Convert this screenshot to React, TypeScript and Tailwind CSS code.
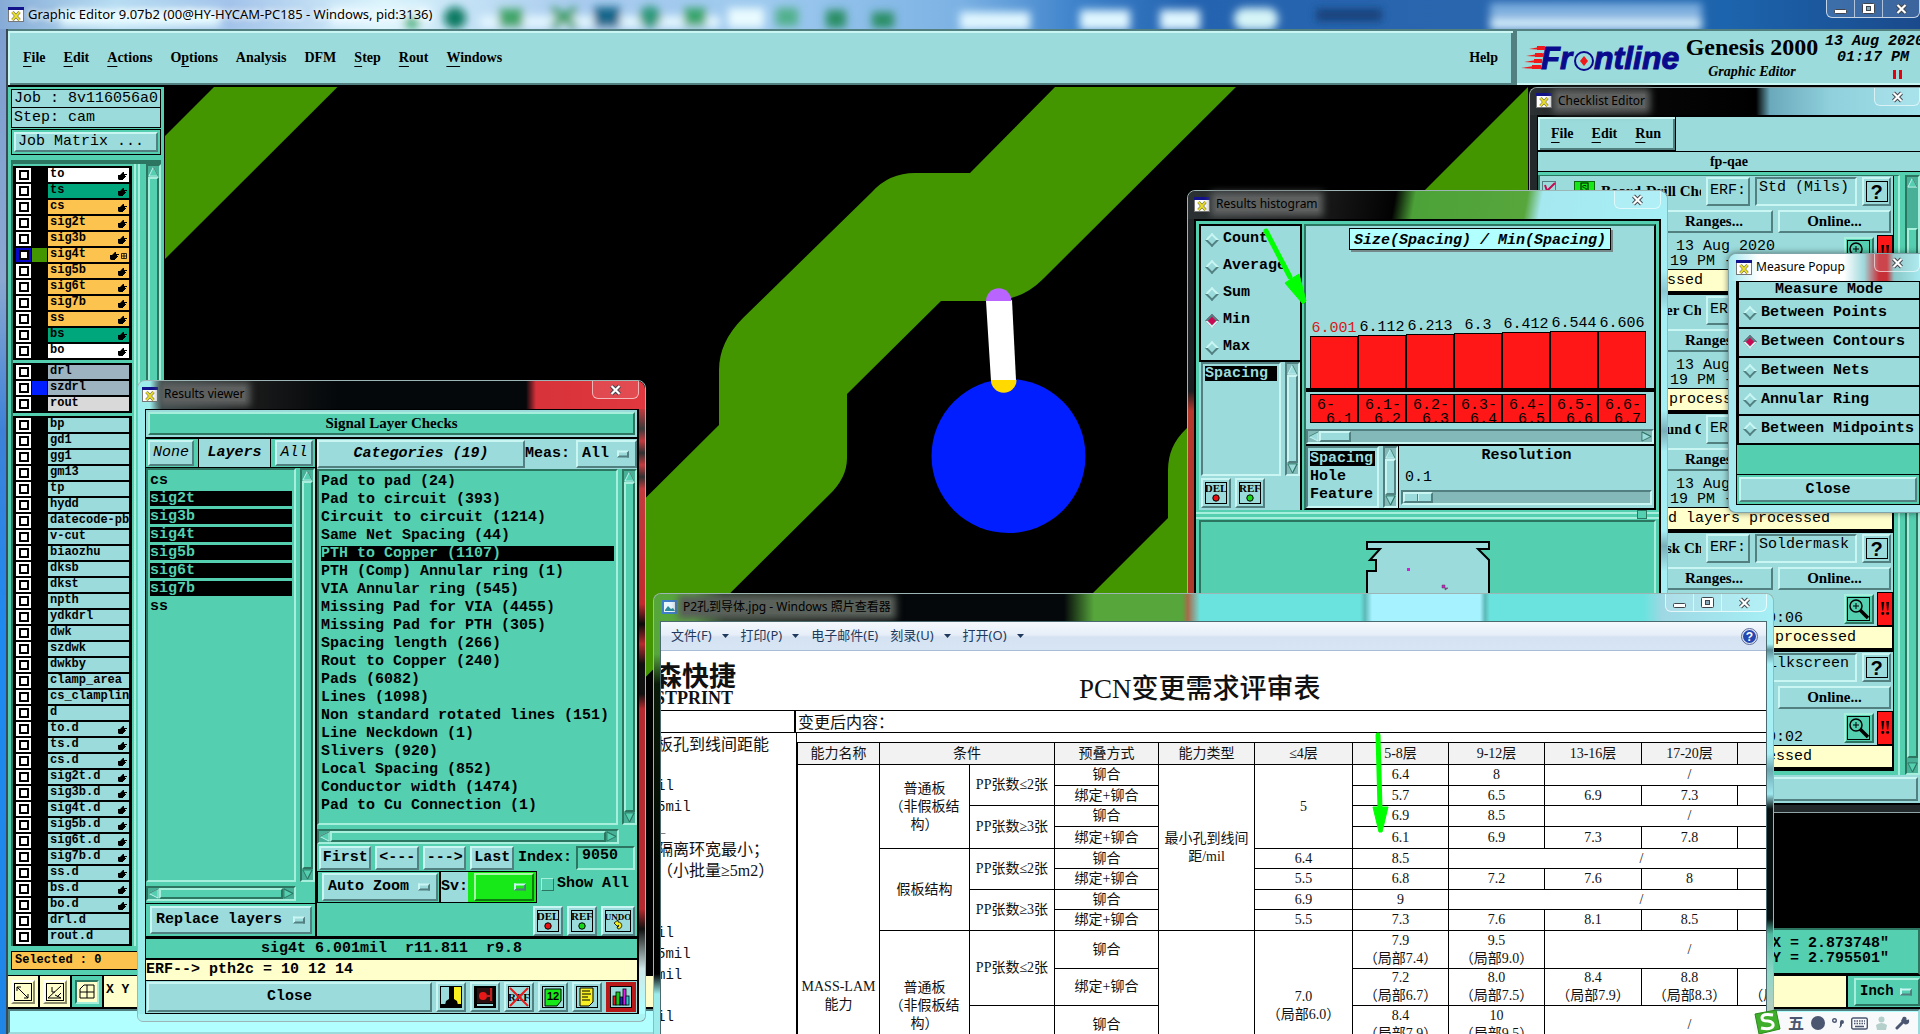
import React from "react";

const MONO = "font-['Liberation_Mono','Noto_Sans_CJK_SC',monospace]";
const SERIF = "font-['Liberation_Serif','Noto_Sans_CJK_SC',serif]";
const UI = "font-['Noto_Sans','Noto_Sans_CJK_SC',sans-serif]";

const RAISED =
  "border-2 border-t-[#c9f6f3] border-l-[#c9f6f3] border-b-[#527f80] border-r-[#527f80] bg-[#9bdbdb]";
const SUNKEN =
  "border-2 border-t-[#527f80] border-l-[#527f80] border-b-[#c9f6f3] border-r-[#c9f6f3] bg-[#9bdbdb]";
const RAISED_TEAL =
  "border-2 border-t-[#a5efdc] border-l-[#a5efdc] border-b-[#2b7561] border-r-[#2b7561] bg-[#54cfb0]";
const SUNKEN_TEAL =
  "border-2 border-t-[#2b7561] border-l-[#2b7561] border-b-[#a5efdc] border-r-[#a5efdc] bg-[#54cfb0]";

/* ---------- small shared pieces ---------- */

function XIcon() {
  return (
    <svg width="16" height="15" viewBox="0 0 16 15" className="shrink-0">
      <rect x="0.5" y="0.5" width="15" height="14" fill="#fff" stroke="#777" />
      <rect width="16" height="3" fill="#12128a" />
      <path d="M4.5 5l7 8M11.5 5l-7 8" stroke="#555" strokeWidth="3" />
      <path d="M4.5 5l7 8M11.5 5l-7 8" stroke="#e8dc2c" strokeWidth="2" />
    </svg>
  );
}

function CloseGlyph() {
  return (
    <svg width="13" height="12" viewBox="0 0 13 12">
      <path d="M2.5 2l8 8M10.5 2l-8 8" stroke="#40454d" strokeWidth="4" />
      <path d="M2.5 2l8 8M10.5 2l-8 8" stroke="#fff" strokeWidth="2.2" />
    </svg>
  );
}

function MinGlyph() {
  return (
    <svg width="13" height="12" viewBox="0 0 13 12">
      <rect x="0.5" y="6.5" width="12" height="4" rx="1" fill="#fff" stroke="#40454d" />
    </svg>
  );
}

function MaxGlyph() {
  return (
    <svg width="13" height="12" viewBox="0 0 13 12">
      <rect x="0.5" y="0.5" width="12" height="10" rx="1" fill="#fff" stroke="#40454d" />
      <rect x="4.5" y="3.5" width="4" height="4" fill="#8ab" stroke="#40454d" />
    </svg>
  );
}

function CloseButton({ className = "w-[47px]" }: { className?: string }) {
  return (
    <button
      aria-label="Close window"
      className={`ml-auto flex h-[18px] shrink-0 items-center justify-center self-start rounded-b-md border border-t-0 border-white/60 bg-white/10 ${className}`}
    >
      <CloseGlyph />
    </button>
  );
}

function ControlTrio({ className = "" }: { className?: string }) {
  return (
    <div className={`ml-auto flex h-[18px] self-start rounded-b-md border border-t-0 border-white/70 bg-white/15 ${className}`}>
      <button aria-label="Minimize" className="flex w-7 items-center justify-center border-r border-white/60"><MinGlyph /></button>
      <button aria-label="Maximize" className="flex w-7 items-center justify-center border-r border-white/60"><MaxGlyph /></button>
      <button aria-label="Close" className="flex flex-1 items-center justify-center"><CloseGlyph /></button>
    </div>
  );
}

function Arrow({ dir, tone }: { dir: "up" | "down" | "left" | "right"; tone: "teal" | "aqua" }) {
  const points = {
    up: "6,1 11,11 1,11",
    down: "6,11 11,1 1,1",
    left: "1,6 11,1 11,11",
    right: "11,6 1,1 1,11",
  }[dir];
  return (
    <svg viewBox="0 0 12 12" className="h-[11px] w-[11px] shrink-0">
      <polygon
        points={points}
        fill={tone === "teal" ? "#54cfb0" : "#9bdbdb"}
        stroke={dir === "up" || dir === "left" ? "#c9f6f3" : "#2b7561"}
        strokeWidth="1"
      />
      <polyline points={points.split(" ").slice(0, 2).join(" ")} fill="none" stroke="#2b7561" strokeWidth="1" />
    </svg>
  );
}

function VScroll({ tone = "teal", thumb = "flex-1" }: { tone?: "teal" | "aqua"; thumb?: string }) {
  const trough = tone === "teal" ? "border-t-[#2b7561] border-l-[#2b7561] border-b-[#a5efdc] border-r-[#a5efdc] bg-[#47b096]" : "border-t-[#527f80] border-l-[#527f80] border-b-[#c9f6f3] border-r-[#c9f6f3] bg-[#84b9b9]";
  return (
    <div className={`flex w-[15px] shrink-0 flex-col items-center self-stretch border-2 ${trough}`}>
      <Arrow dir="up" tone={tone} />
      <div className={`w-[11px] ${thumb} ${tone === "teal" ? RAISED_TEAL : RAISED}`} />
      <div className={thumb === "flex-1" ? "" : "flex-1"} />
      <Arrow dir="down" tone={tone} />
    </div>
  );
}

function HScroll({ tone = "teal", thumb = "flex-1" }: { tone?: "teal" | "aqua"; thumb?: string }) {
  const trough = tone === "teal" ? "border-t-[#2b7561] border-l-[#2b7561] border-b-[#a5efdc] border-r-[#a5efdc] bg-[#47b096]" : "border-t-[#527f80] border-l-[#527f80] border-b-[#c9f6f3] border-r-[#c9f6f3] bg-[#84b9b9]";
  return (
    <div className={`flex h-[15px] items-center border-2 ${trough}`}>
      <Arrow dir="left" tone={tone} />
      <div className={`h-[11px] ${thumb} ${tone === "teal" ? RAISED_TEAL : RAISED}`} />
      <div className={thumb === "flex-1" ? "" : "flex-1"} />
      <Arrow dir="right" tone={tone} />
    </div>
  );
}

function OptionMenu({ label, options, className, tone = "aqua" }: { label: string; options: string[]; className: string; tone?: "aqua" | "green" | "teal" }) {
  const skin = {
    aqua: RAISED,
    teal: RAISED_TEAL,
    green: "border-2 border-t-[#a6f7a6] border-l-[#a6f7a6] border-b-[#0f7a0f] border-r-[#0f7a0f] bg-[#17e817]",
  }[tone];
  return (
    <div className="relative flex">
      <select aria-label={label} className={`appearance-none outline-none ${skin} ${className}`}>
        {options.map((o) => (
          <option key={o}>{o}</option>
        ))}
      </select>
      <span className="pointer-events-none absolute right-2 top-1/2 h-[7px] w-3 -translate-y-1/2 border-2 border-t-[#c9f6f3] border-l-[#c9f6f3] border-b-[#527f80] border-r-[#527f80]" />
    </div>
  );
}

function Diamond({ name, checked }: { name: string; checked?: boolean }) {
  return (
    <input
      type="radio"
      name={name}
      defaultChecked={checked}
      className="h-[10px] w-[10px] shrink-0 rotate-45 appearance-none border-2 border-t-[#c9f6f3] border-l-[#c9f6f3] border-b-[#527f80] border-r-[#527f80] checked:border-t-[#527f80] checked:border-l-[#527f80] checked:border-b-[#c9f6f3] checked:border-r-[#c9f6f3] checked:bg-[#c80a52]"
    />
  );
}

function PixelButton({ label, children, wide }: { label: string; children: React.ReactNode; wide?: boolean }) {
  return (
    <button aria-label={label} className={`flex h-[30px] shrink-0 items-center justify-center ${wide ? "w-[34px]" : "w-[30px]"} ${RAISED}`}>
      {children}
    </button>
  );
}

function TagIcon({ text, kind }: { text: string; kind: "red" | "green" | "undo" }) {
  const w = kind === "undo" ? 26 : 22;
  return (
    <svg width={w} height="22" viewBox={`0 0 ${w} 22`}>
      <rect x="0.5" y="0.5" width={w - 1} height="21" fill="none" stroke="#000" />
      <text x={w / 2} y="10" textAnchor="middle" fontFamily="Liberation Serif" fontSize={kind === "undo" ? "9" : "11"} fontWeight="bold">{text}</text>
      {kind === "undo" ? (
        <path d="M9 13l4-3v2c5 0 5 7 0 7l-1-2c2 0 2-2 1-2v2z" fill="#f2ee1d" stroke="#000" strokeWidth="0.8" />
      ) : (
        <circle cx={w / 2} cy="16" r="3.200" fill={kind === "red" ? "#e81010" : "#17d817"} stroke="#000" />
      )}
    </svg>
  );
}

/* ---------- main window ---------- */

function BlurredBackdrop() {
  return (
    <svg className="absolute inset-0 h-full w-full" viewBox="0 0 1920 29" preserveAspectRatio="none" aria-hidden="true">
      <defs>
        <filter id="soft" x="-20%" y="-60%" width="140%" height="220%"><feGaussianBlur stdDeviation="4" /></filter>
        <linearGradient id="sky" x1="0" x2="1" y1="0" y2="0">
          <stop offset="0" stopColor="#86abd6" />
          <stop offset="0.06" stopColor="#b6dcf2" />
          <stop offset="0.12" stopColor="#a3c3ea" />
          <stop offset="0.2" stopColor="#d9f3fb" />
          <stop offset="0.3" stopColor="#a9cbee" />
          <stop offset="0.4" stopColor="#9dc9ee" />
          <stop offset="0.5" stopColor="#7cb2e4" />
          <stop offset="0.56" stopColor="#3f83cb" />
          <stop offset="0.62" stopColor="#2463b0" />
          <stop offset="0.76" stopColor="#2a66ae" />
          <stop offset="0.9" stopColor="#1c64ad" />
          <stop offset="1" stopColor="#1a4a8c" />
        </linearGradient>
      </defs>
      <rect width="1920" height="29" fill="url(#sky)" />
      <g filter="url(#soft)">
        <rect x="60" y="10" width="160" height="16" fill="#e6fbff" />
        <rect x="330" y="6" width="100" height="20" fill="#e6f8ff" />
        <rect x="480" y="16" width="240" height="12" fill="#e3f6ff" />
        <circle cx="455" cy="18" r="11" fill="#0f7a63" />
        <circle cx="412" cy="22" r="8" fill="#58b88a" />
        <rect x="499" y="9" width="24" height="18" fill="#3fa568" />
        <path d="M552 9l24 18M576 9l-24 18" stroke="#2f9a5c" strokeWidth="7" />
        <rect x="594" y="7" width="26" height="20" fill="#14668a" />
        <circle cx="650" cy="17" r="11" fill="#2f9a7c" />
        <rect x="684" y="8" width="22" height="18" fill="#38a56c" />
        <rect x="728" y="8" width="36" height="20" fill="#e9fbff" />
        <rect x="776" y="8" width="22" height="18" fill="#51b18c" />
        <rect x="826" y="10" width="20" height="18" fill="#2b8f66" />
        <rect x="872" y="12" width="22" height="16" fill="#2b8f66" />
        <rect x="960" y="12" width="70" height="18" fill="#dff6ff" />
        <rect x="1080" y="10" width="50" height="20" fill="#dff6ff" />
        <rect x="1160" y="10" width="40" height="20" fill="#dff6ff" />
        <rect x="1234" y="8" width="44" height="22" rx="10" fill="#d5f4f8" />
        <rect x="1316" y="9" width="66" height="12" fill="#173f78" />
        <rect x="1490" y="3" width="212" height="14" fill="#7fb0e0" />
        <rect x="1490" y="18" width="212" height="12" fill="#d3ecfb" />
      </g>
    </svg>
  );
}

const MENUS: [string, number][] = [["File", 0], ["Edit", 0], ["Actions", 0], ["Options", 1], ["Analysis", -1], ["DFM", -1], ["Step", 0], ["Rout", 0], ["Windows", 0]];

function MenuLabel({ text, at }: { text: string; at: number }) {
  if (at < 0) return <>{text}</>;
  return (
    <>
      {text.slice(0, at)}
      <span className="underline underline-offset-4">{text[at]}</span>
      {text.slice(at + 1)}
    </>
  );
}

function FrontlineLogo() {
  return (
    <svg width="162" height="34" viewBox="0 0 162 34" role="img" aria-label="Frontline" className="overflow-visible">
      <g fill="#f01818">
        <path d="M8 4L24 1v4zM5 11l18-3v4zM3 17l18-3v4zM0 23l20-3v4z" />
        <rect x="16" y="1" width="7" height="4" /><rect x="14" y="8" width="7" height="4" /><rect x="13" y="14" width="7" height="4" /><rect x="11" y="20" width="8" height="4" />
      </g>
      <text x="20" y="24" fontFamily="Liberation Sans" fontStyle="italic" fontWeight="bold" fontSize="31" fill="#0a0a8c" stroke="#0a0a8c">Fr</text>
      <circle cx="63" cy="16" r="9" fill="none" stroke="#0a0a8c" strokeWidth="2" />
      <path d="M63 11l4 5-4 5-4-5z" fill="#f01818" />
      <text x="73" y="24" fontFamily="Liberation Sans" fontStyle="italic" fontWeight="bold" fontSize="32" fill="#0a0a8c" stroke="#0a0a8c">ntline</text>
    </svg>
  );
}

type Layer = { name: string; bg: string; hand?: boolean; swatch?: string; active?: boolean };
const W = "bg-white", G = "bg-[#00a67c]", O = "bg-[#fcc44f]", A = "bg-[#9bdbdb]";
const GROUPS: Layer[][] = [
  [
    { name: "to", bg: W, hand: true },
    { name: "ts", bg: G, hand: true },
    { name: "cs", bg: O, hand: true },
    { name: "sig2t", bg: O, hand: true },
    { name: "sig3b", bg: O, hand: true },
    { name: "sig4t", bg: O, hand: true, swatch: "bg-[#439600]", active: true },
    { name: "sig5b", bg: O, hand: true },
    { name: "sig6t", bg: O, hand: true },
    { name: "sig7b", bg: O, hand: true },
    { name: "ss", bg: O, hand: true },
    { name: "bs", bg: G, hand: true },
    { name: "bo", bg: W, hand: true },
  ],
  [
    { name: "drl", bg: "bg-[#9db3bf]" },
    { name: "szdrl", bg: "bg-[#9db3bf]", swatch: "bg-[#001eff]" },
    { name: "rout", bg: "bg-[#d9d9d9]" },
  ],
  [
    ..."bp gd1 gg1 gm13 tp hydd datecode-pbo v-cut biaozhu dksb dkst npth ydkdrl dwk szdwk dwkby clamp_area cs_clampline d"
      .split(" ").map((name) => ({ name, bg: A })),
    ..."to.d ts.d cs.d sig2t.d sig3b.d sig4t.d sig5b.d sig6t.d sig7b.d ss.d bs.d bo.d"
      .split(" ").map((name) => ({ name, bg: A, hand: true })),
    { name: "drl.d", bg: A },
    { name: "rout.d", bg: A },
  ],
];

function Hand() {
  return (
    <svg width="9" height="9" viewBox="0 0 9 9" className="shrink-0">
      <path d="M0 4h2l3-3h1v2h3v1H7v1h1v1H7v1H6v1H5v1H1L0 8z" fill="#000" />
    </svg>
  );
}

function LayerRow({ layer }: { layer: Layer }) {
  return (
    <label className="flex h-4 items-start gap-px">
      <span className={`flex h-[14px] w-[15px] shrink-0 items-center justify-center ${layer.active ? "bg-[#0808c8]" : "bg-white"}`}>
        <input type="checkbox" className="h-[10px] w-[10px] appearance-none border-2 border-black bg-white" />
      </span>
      <span className={`h-[14px] w-[15px] shrink-0 ${layer.swatch ?? ""}`} />
      <span className={`flex h-[14px] min-w-0 flex-1 items-center overflow-hidden px-0.5 text-xs font-bold leading-[13px] ${layer.bg}`}>
        <span className="flex-1 self-start whitespace-nowrap">{layer.name}</span>
        {layer.hand && <Hand />}
        {layer.active && (
          <svg width="6" height="7" viewBox="0 0 6 7" className="ml-0.5 shrink-0"><path d="M.5 1.500h5v5h-5zM3 1.500v5M.5 4h5" fill="none" stroke="#000" strokeWidth=".8" /></svg>
        )}
      </span>
    </label>
  );
}

function Sidebar() {
  return (
    <aside className="flex w-[156px] shrink-0 flex-col bg-[#54cfb0] px-[3px] pt-0.5">
      <div className="h-[19px] whitespace-nowrap border border-black bg-[#9bdbdb] px-0.5 text-[15px] leading-[18px]">Job : 8v116056a0</div>
      <div className="h-5 border border-t-0 border-black bg-[#9bdbdb] px-0.5 text-[15px] leading-[20px]">Step: cam</div>
      <div className="mt-px border border-black p-0.5">
        <button className={`block h-5 w-full px-0.5 text-left text-[15px] leading-[16px] ${RAISED}`}>Job Matrix ...</button>
      </div>
      <div className="mt-[5px] flex border-t-4 border-[#2b7561]">
        <div className="flex w-[123px] flex-col gap-[3px] border-l-2 border-[#2b7561] pt-0.5">
          {GROUPS.map((g, i) => (
            <div key={i} className="mr-0.5 bg-black px-[3px] pt-0.5">
              {g.map((l) => <LayerRow key={l.name} layer={l} />)}
            </div>
          ))}
        </div>
        <div className="mr-1.5 flex-1 border-x-2 border-[#a5efdc]" />
        <VScroll />
      </div>
      <div className="mt-[5px] h-[19px] border border-black bg-[#fcc44f] px-[3px] text-xs font-bold leading-[16px]">Selected : 0</div>
    </aside>
  );
}

function Canvas() {
  return (
    <main className="relative min-w-0 flex-1 overflow-hidden bg-black">
      <svg className="h-full w-full" viewBox="164 87 1756 888" preserveAspectRatio="xMinYMin slice" aria-label="Layer drawing">
        <g fill="#439600">
          <path d="M214 87H337.500L165 259V136z" />
          <path d="M1055 87L970 173H915Q889 173 872 192L743 318Q719 342 719 370V425L560 583V762L829 495Q847 478 847 458V394L941 301H985Q1020 302 1042 280L1236 87z" />
          <path d="M1528 87L1186 429Q1168 446 1168 470V518L1000 686H1528z" />
        </g>
        <circle cx="1008.500" cy="456" r="77" fill="#001eff" />
        <path d="M986 301L1012 300L1016 380L991 381z" fill="#fff" />
        <path d="M986 301a12.700 12.700 0 0 1 25.500 0z" fill="#b964ff" />
        <path d="M991 380h25.500a12.700 12.700 0 0 1-25.500 0z" fill="#ffd900" />
      </svg>
      <div className="absolute bottom-0 right-0 flex h-[47px] w-[400px] flex-col justify-center border-2 border-t-[#2b7561] border-b-black border-x-[#2b7561] bg-[#54cfb0] pb-0.5 pl-[250px] text-[15px] font-bold leading-[15px]">
        <div>X = 2.873748"</div>
        <div>Y = 2.795501"</div>
      </div>
    </main>
  );
}

function ToolbarIcon({ label, children, active }: { label: string; children: React.ReactNode; active?: boolean }) {
  return (
    <button aria-label={label} className={`flex w-8 shrink-0 items-center justify-center border-r-2 border-black ${active ? "bg-[#54cfb0]" : "bg-[#ffffcc]"}`}>
      <span className={`flex h-6 w-6 items-center justify-center border-2 bg-[#ffffcc] ${active ? "border-t-[#2b7561] border-l-[#2b7561] border-b-[#a5efdc] border-r-[#a5efdc]" : "border-t-white border-l-white border-b-[#8c8c6a] border-r-[#8c8c6a]"}`}>
        <svg width="20" height="20" viewBox="0 0 20 20" fill="none" stroke="#000">{children}</svg>
      </span>
    </button>
  );
}

function MainWindow() {
  return (
    <div className={`flex h-screen flex-col ${MONO}`}>
      <header className={`relative flex h-[29px] shrink-0 overflow-hidden bg-[#86abd6] pl-2 ${UI}`}>
        <BlurredBackdrop />
        <div className="relative flex items-center gap-1"><XIcon /><h1 className="whitespace-nowrap text-[13px] [text-shadow:0_0_6px_#fff,0_0_6px_#fff]">Graphic Editor 9.07b2 (00@HY-HYCAM-PC185 - Windows, pid:3136)</h1></div>
        <ControlTrio className="relative w-[94px]" />
      </header>
      <div className="flex min-h-0 flex-1">
        <div className="w-2 shrink-0 border-r-2 border-[#3a4a55] bg-[linear-gradient(180deg,#7d9fd0_0%,#8aa8d2_25%,#3d82d8_40%,#1e8af0_60%,#1f86e6_100%)]" />
        <div className="flex min-w-0 flex-1 flex-col">
          <div className="flex h-[58px] shrink-0 border-b-2 border-black bg-[#9bdbdb]">
            <nav className={`flex min-w-0 flex-1 items-center gap-[18px] border-t-2 border-[#527f80] px-[15px] pb-0.5 text-[14px] font-bold shadow-[inset_2px_2px_0_#c9f6f3,inset_-2px_-2px_0_#527f80] ${SERIF}`}>
              {MENUS.map(([t, at]) => <button key={t}><MenuLabel text={t} at={at} /></button>)}
              <button className="ml-auto">Help</button>
            </nav>
            <div className="flex w-[407px] shrink-0 items-start overflow-hidden border-l-4 border-t-2 border-[#527f80] pl-1 pt-[3px] shadow-[inset_0_-2px_0_#c9f6f3]">
              <div className="pt-[11px]"><FrontlineLogo /></div>
              <div className={`w-[138px] shrink-0 text-center font-bold ${SERIF}`}>
                <div className="whitespace-nowrap text-2xl leading-[26px]">Genesis 2000</div>
                <div className="text-[14px] italic leading-[24px]">Graphic Editor</div>
              </div>
              <div className="ml-1 shrink-0 text-[15px] font-bold italic leading-4">
                <div className="whitespace-nowrap">13 Aug 2020</div>
                <div className="pl-3">01:17 PM</div>
                <div className="ml-[68px] mt-1 h-[9px] w-[9px] border-x-[3px] border-red-600" />
              </div>
            </div>
          </div>
          <div className="flex min-h-0 flex-1"><Sidebar /><Canvas /></div>
          <div className="flex h-[34px] shrink-0 border-b-2 border-t border-black bg-[#ffffcc]">
            <ToolbarIcon label="Scale"><rect x="1.500" y="1.500" width="17" height="17" /><path d="M4 5l11 11M4 9V5h4M15 12v4h-4" /></ToolbarIcon>
            <ToolbarIcon label="Angle"><rect x="1.500" y="1.500" width="17" height="17" /><path d="M3 16L16 4M3 16h13M7 5v5h3M10 13l6 3M12 15l4-4" /></ToolbarIcon>
            <ToolbarIcon label="Grid" active><path d="M3 16V7l4-4h10v13zM3 10h14M10 3v13" /></ToolbarIcon>
            <label htmlFor="xy" className="self-center px-0.5 pb-1 text-[13px] font-bold">X Y</label>
            <input id="xy" className="min-w-0 flex-1 bg-transparent outline-none" />
            <div className="flex items-center border-l-2 border-black bg-[#54cfb0] pl-1.5">
              <OptionMenu label="Units" tone="teal" options={["Inch", "mm"]} className="h-7 w-[66px] px-1 text-[14px] font-bold" />
            </div>
          </div>
          <div className="h-[25px] shrink-0 border-2 border-t-[#527f80] border-l-[#527f80] border-b-[#9bdbdb] border-r-[#9bdbdb] bg-[#b2ffff]" />
        </div>
      </div>
    </div>
  );
}

/* ---------- results viewer ---------- */

const CATEGORIES = [
  "Pad to pad (24)", "Pad to circuit (393)", "Circuit to circuit (1214)", "Same Net Spacing (44)", "PTH to Copper (1107)",
  "PTH (Comp) Annular ring (1)", "VIA Annular ring (545)", "Missing Pad for VIA (4455)", "Missing Pad for PTH (305)",
  "Spacing length (266)", "Rout to Copper (240)", "Pads (6082)", "Lines (1098)", "Non standard rotated lines (151)",
  "Line Neckdown (1)", "Slivers (920)", "Local Spacing (852)", "Conductor width (1474)", "Pad to Cu Connection (1)",
];

function ListBox({ items, selected, label }: { items: string[]; selected: string[]; label: string }) {
  return (
    <ul role="listbox" aria-label={label} aria-multiselectable="true" className="min-w-0 flex-1 overflow-hidden px-0.5 text-[15px] font-bold">
      {items.map((it) => {
        const on = selected.includes(it);
        return (
          <li key={it} role="option" aria-selected={on} className={`my-[3px] h-[15px] whitespace-nowrap leading-[16px] ${on ? "bg-black text-[#54cfb0]" : ""}`}>{it}</li>
        );
      })}
    </ul>
  );
}

function ResultsViewer() {
  return (
    <section className="absolute left-[137px] top-[380px] w-[509px] overflow-hidden rounded-t-lg rounded-b-md border border-[#9db5b5] bg-[linear-gradient(90deg,#9beceb_0,#9beceb_18px,#000_26px)] px-[7px] pb-[7px]">
      <div className="absolute bottom-0 right-0 top-7 w-1.5 bg-[linear-gradient(180deg,#c23a3e_0,#3a3a3a_20px,#c23a3e_32px,#303030_44px,#c23a3e_56px,#303030_68px,#c23a3e_80px,#c22a2e_195px,#0a0a0a_215px,#b52a2e_235px,#101010_255px,#101010_285px,#b52a2e_300px,#b52a2e_500px,#101010_520px,#cfe8e8_560px,#b2ffff_600px)]" />
      <div className="absolute inset-x-0 bottom-0 h-[7px] bg-[#a9f3f3]" />
      <header className="relative -mx-[7px] flex h-[28px] items-center gap-1 rounded-t-lg bg-[linear-gradient(90deg,#9beceb_0,#9beceb_12px,#3a4a4a_24px,#1b1b1b_110px,#04080a_200px,#04080a_388px,#d8323a_398px,#e0383e_100%)] pb-0.5 pl-1 pr-1.5">
        <XIcon />
        <h2 className={`ml-0.5 bg-[#5e6060] text-[12px] leading-[14px] shadow-[0_0_7px_5px_#5e6060] ${UI}`}>Results viewer</h2>
        <CloseButton />
      </header>
      <div className={`relative border border-black bg-black ${MONO}`}>
        <div className="bg-[#9bdbdb] p-0.5">
          <div className={`h-[23px] text-center text-[15px] font-bold leading-[18px] ${RAISED_TEAL} ${SERIF}`}>Signal Layer Checks</div>
        </div>
        <div className="mt-0.5 flex gap-0.5">
          <div className="flex w-[169px] shrink-0 flex-col bg-[#54cfb0]">
            <div className="flex h-[29px] items-stretch gap-1 border-b border-black bg-[#54cfb0] text-[15px] italic">
              <button className={`my-px ml-0.5 w-[46px] leading-[22px] ${RAISED}`}>None</button>
              <div className="flex-1 border-x border-black bg-[#9bdbdb] text-center font-bold leading-[27px]">Layers</div>
              <button className={`my-px mr-0.5 w-[38px] leading-[22px] ${RAISED}`}>All</button>
            </div>
            <div className="flex flex-1 gap-1">
              <div className={`flex flex-1 ${SUNKEN_TEAL}`}>
                <ListBox label="Layers" items={["cs", "sig2t", "sig3b", "sig4t", "sig5b", "sig6t", "sig7b", "ss"]} selected={["sig2t", "sig3b", "sig4t", "sig5b", "sig6t", "sig7b"]} />
              </div>
              <VScroll />
            </div>
            <div className="mb-0.5 mr-[19px] mt-1"><HScroll /></div>
            <div className="border-t border-black py-0.5 pl-1 pr-0.5">
              <OptionMenu label="Layer list mode" options={["Replace layers", "Add layers"]} className="h-7 w-[162px] px-1 text-[15px] font-bold" />
            </div>
          </div>
          <div className="flex min-w-0 flex-1 flex-col bg-[#54cfb0]">
            <div className="flex h-[30px] items-center bg-[#9bdbdb] text-[15px] font-bold">
              <button className={`h-[28px] w-[208px] italic leading-[22px] ${RAISED}`}>Categories (19)</button>
              <span className="flex-1">Meas:</span>
              <OptionMenu label="Meas" options={["All"]} className="h-[28px] w-[61px] px-1" />
            </div>
            <div className="flex gap-1">
              <div className={`flex flex-1 pb-[7px] ${SUNKEN_TEAL}`}>
                <ListBox label="Categories" items={CATEGORIES} selected={["PTH to Copper (1107)"]} />
              </div>
              <VScroll />
            </div>
            <div className="mb-0.5 mr-[18px] mt-1"><HScroll /></div>
            <div className="flex h-[24px] items-stretch gap-1 px-0.5 text-[15px] font-bold">
              <button className={`w-[53px] leading-[18px] ${RAISED}`}>First</button>
              <button className={`w-[44px] leading-[18px] ${RAISED}`}>&lt;---</button>
              <button className={`w-[44px] leading-[18px] ${RAISED}`}>---&gt;</button>
              <button className={`w-[44px] leading-[18px] ${RAISED}`}>Last</button>
              <label htmlFor="index" className="flex-1 self-center">Index:</label>
              <input id="index" defaultValue="9050" className={`w-[59px] px-1 pb-1 outline-none ${SUNKEN_TEAL}`} />
            </div>
            <div className="mt-px flex h-8 items-center text-[15px] font-bold">
              <div className="flex h-full items-center border border-black pl-1 pr-px">
                <OptionMenu label="Zoom mode" options={["Auto Zoom", "Manual"]} className="h-7 w-[116px] px-1" />
              </div>
              <div className="flex h-full items-center border border-black bg-[#9bdbdb]">
                <span className="w-[27px]">Sv:</span>
                <div className="flex h-full items-center bg-[#17e817] pl-1.5 pr-0.5">
                  <OptionMenu label="Severity" tone="green" options={[""]} className="h-7 w-[60px]" />
                </div>
              </div>
              <label className="ml-1 flex items-center gap-[3px] whitespace-nowrap pb-1.5">
                <input type="checkbox" className="h-[13px] w-[13px] appearance-none border border-t-[#a5efdc] border-l-[#a5efdc] border-b-[#2b7561] border-r-[#2b7561]" />
                Show All
              </label>
            </div>
            <div className="flex flex-1 items-start justify-end gap-1 pr-0.5 pt-[3px]">
              <PixelButton label="Delete"><TagIcon text="DEL" kind="red" /></PixelButton>
              <PixelButton label="Reference"><TagIcon text="REF" kind="green" /></PixelButton>
              <PixelButton label="Undo" wide><TagIcon text="UNDO" kind="undo" /></PixelButton>
            </div>
          </div>
        </div>
        <div className="mt-[3px] h-[19px] whitespace-pre bg-[#54cfb0] text-center text-[15px] font-bold leading-[19px]">sig4t 6.001mil  r11.811  r9.8</div>
        <div className="mt-0.5 h-[20px] bg-[#ffffcc] text-[15px] font-bold leading-[19px]">ERF--&gt; pth2c = 10 12 14</div>
        <div className="mt-px flex gap-1 bg-[#9bdbdb] p-px">
          <button className={`h-[30px] flex-1 text-[15px] font-bold leading-[24px] ${RAISED}`}>Close</button>
          <PixelButton label="Silhouette">
            <svg width="22" height="22" viewBox="0 0 22 22"><rect width="22" height="22" fill="#000" /><rect x="1" y="1" width="9" height="17" fill="#9bdbdb" /><rect x="13" y="1" width="8" height="17" fill="#f8f020" /><path d="M9 0h5v13l3 2 1 4 4 1v2H0v-2l5-1 1-4 3-2z" fill="#000" /></svg>
          </PixelButton>
          <PixelButton label="Snapshot">
            <svg width="22" height="22" viewBox="0 0 22 22"><rect width="22" height="22" fill="#000" /><rect x="3" y="2" width="16" height="15" fill="#2a1010" /><circle cx="9" cy="10" r="4" fill="#e81818" /><path d="M17 2v13M12 10h5" stroke="#c02020" strokeWidth="2" /><rect x="3" y="18" width="16" height="2" fill="#9bdbdb" /></svg>
          </PixelButton>
          <PixelButton label="Clear reference">
            <svg width="22" height="22" viewBox="0 0 22 22"><rect x=".5" y=".5" width="21" height="21" fill="none" stroke="#000" /><text x="11" y="15" textAnchor="middle" fontFamily="Liberation Serif" fontSize="11" fontWeight="bold">REF</text><path d="M2 2l18 18M20 2L2 20" stroke="#e81818" strokeWidth="2" /></svg>
          </PixelButton>
          <PixelButton label="Numbered pages">
            <svg width="22" height="22" viewBox="0 0 22 22"><rect x=".5" y=".5" width="21" height="21" fill="none" stroke="#000" /><path d="M3 3h16v12l-4 5H3z" fill="#17e817" stroke="#000" /><text x="11" y="14" textAnchor="middle" fontFamily="Liberation Sans" fontSize="11" fontWeight="bold">12</text></svg>
          </PixelButton>
          <PixelButton label="Notes">
            <svg width="22" height="22" viewBox="0 0 22 22"><rect x=".5" y=".5" width="21" height="21" fill="none" stroke="#000" /><path d="M4 2h13v14l-4 4H4z" fill="#f8f020" stroke="#000" /><path d="M6 5h8M6 8h9M6 11h6M6 14h8" stroke="#000" /></svg>
          </PixelButton>
          <button aria-label="Histogram" className="flex h-[30px] w-[30px] items-center justify-center bg-[#b81818]">
            <svg width="22" height="22" viewBox="0 0 22 22"><rect x=".5" y=".5" width="21" height="21" fill="#9bdbdb" stroke="#000" /><g stroke="#000" strokeWidth=".8"><rect x="3" y="10" width="3" height="9" fill="#e81818" /><rect x="6" y="6" width="4" height="13" fill="#17c817" /><rect x="10" y="11" width="3" height="8" fill="#2020e0" /><rect x="13" y="3" width="3" height="16" fill="#e020e0" /><rect x="16" y="10" width="3" height="9" fill="#20d0e0" /></g></svg>
          </button>
        </div>
      </div>
    </section>
  );
}

/* ---------- checklist editor ---------- */

type Check = { title: string; titlePad: string; erf: string; date?: string; time: string; timePad: string; status: string; statusPad: string };
const CHECKS: Check[] = [
  { title: "Board-Drill Checks", titlePad: "", erf: "Std (Mils)", date: "13 Aug 2020", time: "19 PM -", timePad: "pl-[130px]", status: "ssed", statusPad: "pl-[126px]" },
  { title: "er Checks", titlePad: "pl-[124px]", erf: "", date: "13 Aug 2020", time: "19 PM -", timePad: "pl-[130px]", status: "processed", statusPad: "pl-[128px]" },
  { title: "und Checks", titlePad: "pl-[124px]", erf: "", date: "13 Aug 2020", time: "19 PM -", timePad: "pl-[130px]", status: "d layers processed", statusPad: "pl-[127px]" },
  { title: "sk Checks", titlePad: "pl-[124px]", erf: "Soldermask", time: "0:06", timePad: "pl-[227px]", status: "processed", statusPad: "pl-[234px]" },
  { title: "", titlePad: "", erf: "Silkscreen", time: "0:02", timePad: "pl-[227px]", status: "essed", statusPad: "pl-[226px]" },
];

function CheckItem({ item, index }: { item: Check; index: number }) {
  return (
    <article className="h-[119px] border-b-[3px] border-black bg-[#9bdbdb]">
      <div className="flex h-[31px] items-center gap-[5px] overflow-hidden pl-0.5 pr-0.5">
        <div className={`flex w-[159px] shrink-0 items-center overflow-hidden whitespace-nowrap ${item.titlePad}`}>
          {index === 0 && (
            <>
              <svg width="14" height="14" viewBox="0 0 14 14" className="mb-2 shrink-0"><rect x=".5" y=".5" width="13" height="13" fill="#9bdbdb" stroke="#527f80" /><path d="M3 4l2 6 8-8" fill="none" stroke="#c80a52" strokeWidth="2" /></svg>
              <svg width="21" height="22" viewBox="0 0 21 22" className="ml-[18px] mr-[6px] shrink-0"><rect x=".5" y=".5" width="20" height="21" fill="#17e817" stroke="#0b6b0b" /><rect x="7" y="2" width="7" height="10" fill="none" stroke="#000" /><text x="10.500" y="10" textAnchor="middle" fontFamily="Liberation Mono" fontSize="9">S</text></svg>
            </>
          )}
          <span className={`text-[15px] font-bold ${SERIF}`}>{item.title}</span>
        </div>
        <button className={`h-[29px] w-[44px] shrink-0 ${RAISED}`}>ERF:</button>
        <input aria-label={`ERF model ${index + 1}`} defaultValue={item.erf} className={`h-[29px] min-w-0 flex-1 px-0.5 pb-2 outline-none ${SUNKEN}`} />
        <button aria-label="Help" className={`flex h-[29px] w-[29px] shrink-0 items-center justify-center ${RAISED}`}>
          <span className="h-[21px] w-[22px] border border-black font-['Liberation_Sans',sans-serif] text-xl font-bold leading-[20px]">?</span>
        </button>
      </div>
      <div className={`flex h-[28px] items-center gap-[5px] pr-0.5 text-[15px] font-bold ${SERIF}`}>
        <button className={`ml-[115px] h-[23px] min-w-0 flex-1 leading-[19px] ${RAISED}`}>Ranges...</button>
        <button className={`h-[23px] w-[113px] shrink-0 leading-[19px] ${RAISED}`}>Online...</button>
      </div>
      <div className="flex h-[34px] items-end gap-[3px]">
        <div className="min-w-0 flex-1 whitespace-nowrap leading-[15px]">
          <div className="pl-[136px]">{item.date}</div>
          <div className={item.timePad}>{item.time}</div>
        </div>
        <button aria-label="Zoom to results" className={`mb-0.5 flex h-[30px] w-[30px] shrink-0 items-center justify-center ${RAISED_TEAL}`}>
          <svg width="24" height="24" viewBox="0 0 24 24" fill="none" stroke="#000"><rect x=".5" y=".5" width="22" height="23" /><circle cx="9" cy="9" r="6" strokeWidth="1.500" /><path d="M6 9h6M9 6v6" /><path d="M13 13l8 8" strokeWidth="3.500" /></svg>
        </button>
        <div className={`flex h-[34px] w-4 shrink-0 items-center justify-center border border-black bg-[#ff1717] text-lg font-bold ${SERIF}`}>‼</div>
      </div>
      <div className={`h-[23px] overflow-hidden whitespace-nowrap border border-black bg-[#ffffcc] leading-[21px] ${item.statusPad}`}>{item.status}</div>
    </article>
  );
}

function ChecklistEditor() {
  return (
    <section className="absolute left-[1529px] right-0 top-[87px] rounded-tl-lg border border-r-0 border-[#8fa5a5] bg-[#23282b] pb-[7px] pl-[7px]">
      <header className="-ml-[7px] flex h-[27px] items-center gap-1 rounded-tl-lg bg-[linear-gradient(90deg,#2c3234_0,#1b1b1b_60px,#050505_130px,#000_226px,#6aa9bb_240px,#8fd0dc_300px,#9fe0ea_100%)] pb-0.5 pl-1.5">
        <XIcon />
        <h2 className={`ml-0.5 bg-[#5e6060] text-[12px] leading-[14px] shadow-[0_0_7px_5px_#5e6060] ${UI}`}>Checklist Editor</h2>
        <CloseButton className="w-[46px]" />
      </header>
      <div className={`border-y-2 border-l border-black bg-[#9bdbdb] text-[15px] ${MONO}`}>
        <nav className={`flex h-[34px] w-[138px] items-center gap-[18px] border-b border-r border-black px-[13px] text-[14px] font-bold shadow-[inset_2px_2px_0_#c9f6f3,inset_-2px_-2px_0_#527f80] ${SERIF}`}>
          {["File", "Edit", "Run"].map((t) => <button key={t}><MenuLabel text={t} at={0} /></button>)}
        </nav>
        <div className={`h-[21px] border-y border-black text-center text-[14px] font-bold leading-[19px] ${SERIF}`}>fp-qae</div>
        <div className="flex gap-[5px] bg-[#54cfb0] pt-[3px]">
          <div className="min-w-0 flex-1 border-l-2 border-t border-r-2 border-[#2b7561] border-r-[#a5efdc] pb-1">
            <div className="mr-1 border-r border-black">
              {CHECKS.map((c, i) => <CheckItem key={i} item={c} index={i} />)}
            </div>
          </div>
          <VScroll thumb="mt-10 h-[530px]" />
        </div>
        <div className="p-0.5"><button aria-label="Close checklist" className={`block h-6 w-full ${RAISED}`} /></div>
      </div>
    </section>
  );
}

/* ---------- histogram ---------- */

const BARS = [
  { v: "6.001", h: "h-[52px]", a: "6-", b: "6.1", hot: true },
  { v: "6.112", h: "h-[53px]", a: "6.1-", b: "6.2" },
  { v: "6.213", h: "h-[54px]", a: "6.2-", b: "6.3" },
  { v: "6.3", h: "h-[55px]", a: "6.3-", b: "6.4" },
  { v: "6.412", h: "h-[56px]", a: "6.4-", b: "6.5" },
  { v: "6.544", h: "h-[57px]", a: "6.5-", b: "6.6" },
  { v: "6.606", h: "h-[57px]", a: "6.6-", b: "6.7" },
];

function Histogram() {
  return (
    <section className="absolute left-[1187px] top-[190px] w-[481px] rounded-t-lg border border-[#9db5b5] bg-[linear-gradient(180deg,#26292b_0,#1b1e20_200px,#b4392c_220px,#a83a2a_100%)] pl-1.5">
      <div className="absolute bottom-0 right-0 top-0 w-2 rounded-tr-lg bg-[linear-gradient(180deg,#a6eff5_0,#a6eff5_80px,#8bc8d2_100px,#a6eff5_120px,#a6eff5_220px,#79aeb8_240px,#a6eff5_260px,#a6eff5_340px,#79aeb8_355px,#a6eff5_380px)]" />
      <header className="relative -ml-1.5 flex h-[28px] items-center gap-1 rounded-t-lg bg-[linear-gradient(100deg,#2c3234_0,#1b1b1b_130px,#020202_205px,#4ca238_225px,#57a63c_335px,#a6e8f0_350px,#a6eff5_100%)] pb-0.5 pl-1.5 pr-1.5">
        <XIcon />
        <h2 className={`ml-0.5 bg-[#5e6060] text-[12px] leading-[14px] shadow-[0_0_7px_5px_#5e6060] ${UI}`}>Results histogram</h2>
        <CloseButton className="w-[47px]" />
      </header>
      <div className={`relative mr-1.5 border-2 border-b-0 border-black bg-[#54cfb0] text-[15px] font-bold ${MONO}`}>
        <div className="flex gap-0.5 border-b-2 border-[#a5efdc] p-[3px] pb-0.5">
          <div className="flex w-[103px] shrink-0 flex-col border-r-2 border-black bg-[#9bdbdb]">
            <fieldset className="h-[138px] overflow-hidden border-2 border-r-0 border-black">
              {["Count", "Average", "Sum", "Min", "Max"].map((t) => (
                <label key={t} className="flex h-[27px] items-center gap-1.5 pl-1.5"><Diamond name="stat" checked={t === "Min"} />{t}</label>
              ))}
            </fieldset>
            <div className="flex h-[114px] gap-1 pl-0.5">
              <div className={`flex-1 p-0.5 ${SUNKEN}`}><div className="w-[72px] bg-black leading-[15px] text-[#9bdbdb]">Spacing</div></div>
              <VScroll tone="aqua" />
            </div>
            <div className="flex gap-1 py-0.5 pl-0.5">
              <PixelButton label="Delete"><TagIcon text="DEL" kind="red" /></PixelButton>
              <PixelButton label="Reference"><TagIcon text="REF" kind="green" /></PixelButton>
            </div>
          </div>
          <div className="flex min-w-0 flex-1 flex-col border-2 border-[#2b7561] border-r-black border-b-black bg-[#9bdbdb]">
            <div className="mx-auto mt-0.5 h-[22px] whitespace-nowrap border border-black bg-[#b2ffff] px-1 italic leading-[24px] shadow-[2px_2px_0_#76898a]">Size(Spacing) / Min(Spacing)</div>
            <div className="mt-auto flex items-end border-b-4 border-black pl-1 pr-2">
              {BARS.map((b) => (
                <div key={b.v} className={`min-w-0 flex-1 text-center font-normal leading-[14px] ${b.hot ? "text-[#d81818]" : ""}`}>
                  {b.v}
                  <div className={`border border-b-0 border-black bg-[#ff1717] ${b.h}`} />
                </div>
              ))}
            </div>
            <div className="mt-0.5 flex pl-1 pr-2">
              {BARS.map((b) => (
                <div key={b.v} className="h-[29px] min-w-0 flex-1 overflow-hidden border border-black bg-[#ff1717] pt-1 font-normal leading-[14px]">
                  <div className="pl-1.5">{b.a}</div>
                  <div className="pl-[15px]">{b.b}</div>
                </div>
              ))}
            </div>
            <div className="mt-1.5"><HScroll tone="aqua" thumb="w-[32px]" /></div>
            <div className="flex h-16 border-t-2 border-black">
              <div className="flex w-[92px] gap-1">
                <ul role="listbox" aria-label="Field" className={`flex-1 px-0.5 pt-[3px] ${SUNKEN}`}>
                  <li role="option" aria-selected="true" className="mb-[3px] h-[15px] bg-black leading-[15px] text-[#9bdbdb]">Spacing</li>
                  <li role="option" aria-selected="false" className="mb-[3px] h-[15px] leading-[15px]">Hole</li>
                  <li role="option" aria-selected="false" className="h-[15px] leading-[15px]">Feature</li>
                </ul>
                <VScroll tone="aqua" />
              </div>
              <div className="flex flex-1 flex-col border-l border-black px-0.5">
                <label htmlFor="resolution" className="text-center leading-[20px]">Resolution</label>
                <span className="pl-1 font-normal leading-[24px]">0.1</span>
                <input id="resolution" type="range" min="0" max="10" defaultValue="0" step="0.1" className="h-[15px] w-full appearance-none border-2 border-t-[#527f80] border-l-[#527f80] border-b-[#c9f6f3] border-r-[#c9f6f3] bg-[#84b9b9] [&::-webkit-slider-thumb]:h-[11px] [&::-webkit-slider-thumb]:w-[30px] [&::-webkit-slider-thumb]:appearance-none [&::-webkit-slider-thumb]:border-2 [&::-webkit-slider-thumb]:border-t-[#c9f6f3] [&::-webkit-slider-thumb]:border-l-[#c9f6f3] [&::-webkit-slider-thumb]:border-b-[#527f80] [&::-webkit-slider-thumb]:border-r-[#527f80] [&::-webkit-slider-thumb]:bg-[linear-gradient(90deg,#9bdbdb_0,#9bdbdb_12px,#527f80_12px,#527f80_13px,#c9f6f3_13px,#c9f6f3_14px,#9bdbdb_14px)]" />
              </div>
            </div>
          </div>
        </div>
        <div className="flex h-[5px] justify-end border-b-2 border-[#a5efdc] pr-3"><div className="-mt-1 h-[9px] w-[10px] border border-[#2b7561] bg-[#54cfb0]" /></div>
        <div className="mx-[3px] mt-px h-[110px] border-l-2 border-t-2 border-r-2 border-[#2b7561] border-r-[#a5efdc]">
          <svg className="mx-auto mt-[18px] block h-[92px] w-[126px]" viewBox="0 0 126 92">
            <path d="M2 92V31h9V20H5L15 9H2V2h122v7h-11l11 11v72" fill="#9bdbdb" stroke="#000" strokeWidth="2" />
            <rect x="42" y="28" width="3" height="3" fill="#d020d0" />
            <path d="M77 45h3v3h3l-3 2v-2h-3z" fill="#d020d0" stroke="#444" strokeWidth=".5" />
          </svg>
        </div>
      </div>
      <svg className="pointer-events-none absolute left-[70px] top-[36px]" width="56" height="84" viewBox="0 0 56 84">
        <path d="M8 4L32 50" stroke="#00ff00" strokeWidth="5" strokeLinecap="round" />
        <path d="M27 56L41 47L48 74L45 77z" fill="#00ff00" stroke="#00ff00" strokeLinejoin="round" />
      </svg>
    </section>
  );
}

/* ---------- measure popup ---------- */

function MeasurePopup() {
  return (
    <section className="absolute left-[1728px] right-0 top-[253px] rounded-l-lg border border-r-0 border-[#7fa5aa] bg-[#a6e9ef] pb-[7px] pl-[7px] shadow-[0_0_6px_rgba(0,0,0,.5)]">
      <header className="-ml-[7px] flex h-[27px] items-center gap-1 rounded-tl-lg bg-[linear-gradient(90deg,#a6e9ef_0,#fff_30px,#fff_115px,#9fd8dc_135px,#c83038_150px,#c83038_158px,#8ac7c8_165px,#a6e9ef_100%)] pb-px pl-[7px]">
        <XIcon />
        <h2 className={`text-[12px] ${UI}`}>Measure Popup</h2>
        <CloseButton className="w-[46px]" />
      </header>
      <div className={`border border-black bg-[#54cfb0] text-[15px] font-bold ${MONO}`}>
        <fieldset className="bg-black pb-0.5 pl-0.5">
          <legend className="sr-only">Measure Mode</legend>
          <div className="bg-[#9bdbdb] text-center leading-4">Measure Mode</div>
          {["Between Points", "Between Contours", "Between Nets", "Annular Ring", "Between Midpoints"].map((t) => (
            <label key={t} className="mt-0.5 flex h-[27px] items-center gap-1.5 whitespace-nowrap bg-[#9bdbdb] pb-px pl-1.5">
              <Diamond name="measure" checked={t === "Between Contours"} />{t}
            </label>
          ))}
        </fieldset>
        <div className="mt-[29px] border-t border-black p-0.5">
          <button className={`block h-[25px] w-full leading-[20px] ${RAISED}`}>Close</button>
        </div>
      </div>
    </section>
  );
}

/* ---------- photo viewer ---------- */

const CELL = "border border-black p-0";

function Stack({ a, b }: { a: string; b: string }) {
  return <>{a}<br />{`（局部${b}）`}</>;
}

function SpecTable() {
  const td = (c: React.ReactNode, props: React.TdHTMLAttributes<HTMLTableCellElement> = {}) => <td className={CELL} {...props}>{c}</td>;
  return (
    <table className="mt-[9px] w-[1037px] table-fixed border-collapse whitespace-nowrap text-center text-[14px] leading-[18px]">
      <colgroup>
        <col className="w-[82px]" /><col className="w-[90px]" /><col className="w-[85px]" /><col className="w-[104px]" /><col className="w-[96px]" />
        <col className="w-[98px]" /><col className="w-[96px]" /><col className="w-[96px]" /><col className="w-[97px]" /><col className="w-[96px]" /><col className="w-[97px]" />
      </colgroup>
      <thead>
        <tr className="h-[22px] bg-[#f2f2f2]">
          <th className={`${CELL} font-normal`}>能力名称</th>
          <th className={`${CELL} font-normal`} colSpan={2}>条件</th>
          {["预叠方式", "能力类型", "≤4层", "5-8层", "9-12层", "13-16层", "17-20层", ""].map((t, i) => <th key={i} className={`${CELL} font-normal`}>{t}</th>)}
        </tr>
      </thead>
      <tbody>
        <tr className="h-[21px]">
          {td(<>MASS-LAM<br />能力</>, { rowSpan: 13 })}
          {td(<>普通板<br />（非假板结<br />构）</>, { rowSpan: 4 })}
          {td("PP张数≤2张", { rowSpan: 2 })}{td("铆合")}
          {td(<>最小孔到线间<br />距/mil</>, { rowSpan: 8 })}{td("5", { rowSpan: 4 })}{td("6.4")}{td("8")}{td("/", { colSpan: 3 })}
        </tr>
        <tr className="h-[20px]">{td("绑定+铆合")}{td("5.7")}{td("6.5")}{td("6.9")}{td("7.3")}{td("")}</tr>
        <tr className="h-[21px]">{td("PP张数≥3张", { rowSpan: 2 })}{td("铆合")}{td("6.9")}{td("8.5")}{td("/", { colSpan: 3 })}</tr>
        <tr className="h-[22px]">{td("绑定+铆合")}{td("6.1")}{td("6.9")}{td("7.3")}{td("7.8")}{td("")}</tr>
        <tr className="h-[20px]">{td("假板结构", { rowSpan: 4 })}{td("PP张数≤2张", { rowSpan: 2 })}{td("铆合")}{td("6.4")}{td("8.5")}{td("/", { colSpan: 4 })}</tr>
        <tr className="h-[21px]">{td("绑定+铆合")}{td("5.5")}{td("6.8")}{td("7.2")}{td("7.6")}{td("8")}{td("")}</tr>
        <tr className="h-[20px]">{td("PP张数≥3张", { rowSpan: 2 })}{td("铆合")}{td("6.9")}{td("9")}{td("/", { colSpan: 4 })}</tr>
        <tr className="h-[21px]">{td("绑定+铆合")}{td("5.5")}{td("7.3")}{td("7.6")}{td("8.1")}{td("8.5")}{td("")}</tr>
        <tr className="h-[38px]">
          {td(<>普通板<br />（非假板结<br />构）</>, { rowSpan: 4 })}{td("PP张数≤2张", { rowSpan: 2 })}{td("铆合")}{td("", { rowSpan: 4 })}
          {td(<Stack a="7.0" b="6.0" />, { rowSpan: 4 })}{td(<Stack a="7.9" b="7.4" />)}{td(<Stack a="9.5" b="9.0" />)}{td("/", { colSpan: 3 })}
        </tr>
        <tr className="h-[37px]">{td("绑定+铆合")}{td(<Stack a="7.2" b="6.7" />)}{td(<Stack a="8.0" b="7.5" />)}{td(<Stack a="8.4" b="7.9" />)}{td(<Stack a="8.8" b="8.3" />)}{td(<Stack a="9.3" b="8.8" />)}</tr>
        <tr className="h-[38px]">{td("", { rowSpan: 2 })}{td("铆合")}{td(<Stack a="8.4" b="7.9" />)}{td(<Stack a="10" b="9.5" />)}{td("/", { colSpan: 3 })}</tr>
        <tr className="h-[37px]">{td("")}{td("")}{td("")}{td("")}{td("")}{td("")}</tr>
        <tr className="h-[146px]">{td("", { colSpan: 10 })}</tr>
      </tbody>
    </table>
  );
}

const LEFT_LINES = ["板孔到线间距能", "", "il", "5mil", "_", "隔离环宽最小；", "（小批量≥5m2）", "", "", "il", "5mil", "mil", "", "il"];

function PhotoViewer() {
  return (
    <section className="absolute bottom-0 left-[653px] top-[593px] flex w-[1121px] flex-col overflow-hidden rounded-t-lg border border-b-0 border-[#9db5b5] bg-[linear-gradient(180deg,#57a63c_0,#57a63c_60px,#0a1a08_90px,#000_380px,#9beceb_400px)] px-1.5">
      <div className="absolute bottom-0 right-0 top-0 w-2 bg-[linear-gradient(180deg,#a6eff5_0,#a6eff5_50px,#5b8d96_56px,#a6eff5_70px,#a6eff5_160px,#6ca5ae_175px,#9fe8ef_200px,#061010_215px,#061010_325px,#4fb9a0_340px,#8fd8c8_380px,#b9ccc0_420px)]" />
      <header className="relative -mx-1.5 flex h-[27px] shrink-0 items-center gap-1.5 bg-[linear-gradient(90deg,#57a63c_0,#57a63c_40px,#2a3a2a_70px,#1b1b1b_180px,#04080a_250px,#04080a_410px,#57a63c_440px,#57a63c_528px,#a86a4c_534px,#6ae3de_546px,#6ae3de_706px,#5cb9b6_711px,#a6f2ff_718px,#a6f2ff_826px,#5cb9b6_831px,#6ae3de_836px,#6ae3de_990px,#9ed8e4_1008px,#a6eff5_100%)] pb-px pl-2 pr-1.5">
        <svg width="15" height="14" viewBox="0 0 15 14"><rect width="15" height="14" fill="#3f7fc8" /><rect x="2" y="2" width="11" height="10" fill="#e8f6ff" /><path d="M3 10l3-4 3 3 2-1 2 3H3z" fill="#2b8a9a" /></svg>
        <h2 className={`bg-[#5a605a] text-[12px] leading-[14px] shadow-[0_0_7px_5px_#5a605a] ${UI}`}>P2孔到导体.jpg - Windows 照片查看器</h2>
        <ControlTrio className="w-[102px]" />
      </header>
      <div className="relative flex min-h-0 flex-1 flex-col border-x border-t border-[#4a6a70] bg-white">
        <nav className={`flex h-[29px] shrink-0 items-center gap-1.5 border-b border-[#a9bcd6] bg-[linear-gradient(180deg,#f5f9fd_0,#e6eef8_45%,#d5e2f2_55%,#d8e5f4_100%)] pl-2.5 pr-2 text-[13px] text-[#1e395b] ${UI}`}>
          {["文件(F)", "打印(P)", "电子邮件(E)", "刻录(U)", "打开(O)"].map((t, i) => (
            <button key={t} className="mr-1.5 flex items-center gap-2.5">
              {t}
              {i !== 2 && <svg width="7" height="4" viewBox="0 0 7 4"><path d="M0 0h7L3.500 4z" fill="#1e395b" /></svg>}
            </button>
          ))}
          <button aria-label="Help" className="ml-auto">
            <svg width="17" height="17" viewBox="0 0 17 17"><circle cx="8.500" cy="8.500" r="8" fill="#dfe6f2" stroke="#5a6a9a" /><circle cx="8.500" cy="8.500" r="6.500" fill="#2448b0" /><text x="8.500" y="13" textAnchor="middle" fontFamily="Liberation Sans" fontWeight="bold" fontSize="12" fill="#fff">?</text></svg>
          </button>
        </nav>
        <div className={`flex min-h-0 flex-1 flex-col overflow-hidden text-[#111] ${SERIF}`}>
          <div className="flex h-[60px] shrink-0 items-center border-b border-black">
            <div className="-ml-1.5 w-[84px] pt-2 font-bold">
              <div className="whitespace-nowrap text-[27px] leading-[26px]">森快捷</div>
              <div className="whitespace-nowrap text-[18px] leading-[16px]">STPRINT</div>
            </div>
            <h3 className="ml-[340px] pt-4 text-[27px] font-medium leading-8">PCN变更需求评审表</h3>
          </div>
          <div className="flex h-[22px] shrink-0 border-b border-black text-base leading-[24px]">
            <div className="w-[135px] shrink-0 border-r-2 border-black" />
            <div className="pl-0.5">变更后内容：</div>
          </div>
          <div className="flex min-h-0 flex-1">
            <div className="w-[136px] shrink-0 overflow-hidden border-r border-black">
              <div className="-ml-1 text-base">
                {LEFT_LINES.map((l, i) => (
                  <div key={i} className={`h-[21px] whitespace-nowrap leading-[23px] ${l.endsWith("il") || l === "_" ? "font-['Liberation_Mono',monospace] text-[14px]" : ""}`}>{l}</div>
                ))}
              </div>
            </div>
            <div className="min-w-0 flex-1 overflow-hidden"><SpecTable /></div>
          </div>
        </div>
        <svg className="pointer-events-none absolute left-[708px] top-[108px]" width="24" height="106" viewBox="0 0 24 106">
          <path d="M9 5L11 78" stroke="#00ff00" strokeWidth="5" strokeLinecap="round" />
          <path d="M4 77H19L13 102L10 102z" fill="#00ff00" stroke="#00ff00" strokeLinejoin="round" />
        </svg>
      </div>
    </section>
  );
}

/* ---------- input method bar ---------- */

function ImeBar() {
  return (
    <div className={`absolute bottom-0 right-0.5 flex h-[22px] w-[164px] items-center justify-between rounded-l-md bg-[#f7f9fb] pr-2 text-[#4b5670] ${UI}`}>
      <svg width="27" height="25" viewBox="0 0 27 25" className="-mt-1">
        <path d="M1 5L22 1L26 20L5 25z" fill="#3fae2a" stroke="#2a8a1a" />
        <path d="M19 6Q8 4 8 9Q8 12 14 12Q20 13 19 17Q17 21 7 19" fill="none" stroke="#fff" strokeWidth="3" />
      </svg>
      <span className="text-[16px] font-bold leading-[20px]">五</span>
      <svg width="14" height="14"><circle cx="7" cy="7" r="7" fill="#4b5670" /></svg>
      <svg width="12" height="12" viewBox="0 0 12 12"><circle cx="2.500" cy="3.500" r="1.800" fill="none" stroke="#4b5670" strokeWidth="1.400" /><path d="M8 5a2 2 0 1 1 2 2q0 3-3 4 1.500-2 1-4z" fill="#4b5670" /></svg>
      <svg width="17" height="13" viewBox="0 0 17 13"><rect x=".7" y="1" width="15.600" height="11" rx="1.500" fill="none" stroke="#4b5670" strokeWidth="1.400" /><path d="M3 4h11M3 6.500h11" stroke="#4b5670" strokeWidth="1.500" strokeDasharray="1.500 1" /><path d="M4 9.500h9" stroke="#4b5670" strokeWidth="1.500" /></svg>
      <svg width="13" height="14" viewBox="0 0 13 14"><circle cx="6.500" cy="3.500" r="3" fill="#b5cfcb" /><path d="M1 9q5.500-4 11 0l-1 5H2z" fill="#b5cfcb" /></svg>
      <svg width="15" height="14" viewBox="0 0 15 14"><path d="M2 12l6-6" stroke="#4b5670" strokeWidth="3" strokeLinecap="round" /><path d="M8 1q4-1 3.500 3l2.500-.5q1 5-4 5L6 5z" fill="#4b5670" /></svg>
    </div>
  );
}

export default function App() {
  return (
    <div className="relative min-h-screen w-full overflow-hidden bg-black text-black [&_button]:cursor-default">
      <MainWindow />
      <ChecklistEditor />
      <Histogram />
      <ResultsViewer />
      <PhotoViewer />
      <MeasurePopup />
      <ImeBar />
    </div>
  );
}
